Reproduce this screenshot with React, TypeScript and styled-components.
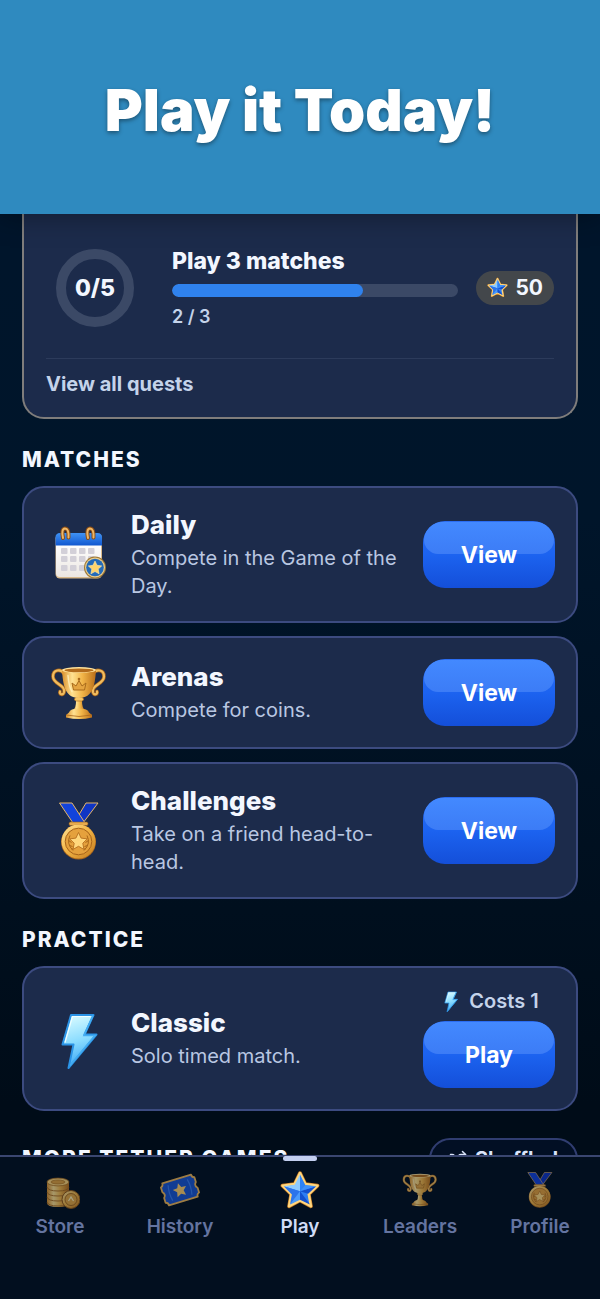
import React from 'react';
import styled, { createGlobalStyle, css } from 'styled-components';
import { Shuffle } from 'lucide-react';

const GlobalStyle = createGlobalStyle`
  *, *::before, *::after {
    box-sizing: border-box;
  }

  body {
    margin: 0;
    background: #000d1b;
    font-family: Inter, 'Liberation Sans', sans-serif;
    color: #f3f7ff;
  }

  h1, h2, h3, p {
    margin: 0;
  }

  button {
    font: inherit;
  }
`;

const Screen = styled.div`
  display: flex;
  flex-direction: column;
  height: 100vh;
  overflow: hidden;
  background: linear-gradient(#00152c, #00152a 40%, #000c18 85%);
`;

const Banner = styled.header`
  position: relative;
  z-index: 1;
  flex: none;
  display: flex;
  justify-content: center;
  padding: 74px 24px 68px;
  background: #2f8abf;
  box-shadow: 0 0 28px rgba(0, 0, 0, 0.4);
`;

const BannerTitle = styled.h1`
  font-size: 58px;
  line-height: 72px;
  font-weight: 900;
  color: #ffffff;
  text-shadow: 0 2px 4px rgba(0, 0, 0, 0.4);
`;

const Content = styled.main`
  flex: 1;
  min-height: 0;
  padding: 0 22px;
  overflow: hidden;
`;

const QuestCard = styled.section`
  padding: 32px 22px 21px;
  background: #1c2b4b;
  border: 2px solid #7f7d7c;
  border-top: 0;
  border-radius: 0 0 22px 22px;
`;

const QuestRow = styled.div`
  display: flex;
  align-items: center;
  padding-bottom: 29px;
  border-bottom: 1px solid #2c3b5b;
`;

const QuestRing = styled.div`
  display: flex;
  align-items: center;
  justify-content: center;
  width: 78px;
  height: 78px;
  margin: 0 38px 0 10px;
  border: 10px solid #3b4966;
  border-radius: 50%;
  font-size: 23px;
  font-weight: 800;
`;

const QuestInfo = styled.div`
  flex: 1;
  display: flex;
  flex-direction: column;
  gap: 8px;
`;

const QuestTitle = styled.h3`
  font-size: 23px;
  line-height: 30px;
  font-weight: 800;
`;

const ProgressTrack = styled.div`
  height: 13px;
  border-radius: 7px;
  background: #3b4966;
  overflow: hidden;
`;

const ProgressFill = styled.div`
  height: 100%;
  border-radius: 7px;
  background: #2f82ee;
`;

const QuestCount = styled.p`
  font-size: 18px;
  line-height: 24px;
  font-weight: 600;
  color: #c4d3ea;
`;

const RewardPill = styled.div`
  display: flex;
  align-items: center;
  gap: 7px;
  height: 34px;
  margin-left: 18px;
  padding: 0 11px;
  border-radius: 17px;
  background: #43474b;
  font-size: 21px;
  font-weight: 700;
`;

const QuestLink = styled.a`
  display: block;
  padding-top: 13px;
  font-size: 20px;
  line-height: 24px;
  font-weight: 700;
  color: #c4d3ea;
  text-decoration: none;
`;

const SectionHead = styled.div`
  display: flex;
  align-items: center;
  justify-content: space-between;
  margin: 27px 0 12px;
`;

const SectionTitle = styled.h2`
  font-size: 21px;
  line-height: 28px;
  font-weight: 800;
  letter-spacing: 2px;
  text-transform: uppercase;
`;

const CardList = styled.div`
  display: flex;
  flex-direction: column;
  gap: 13px;
`;

const Card = styled.article`
  display: flex;
  align-items: center;
  gap: 18px;
  padding: 21px;
  background: #1c2b4b;
  border: 2px solid #3c4b80;
  border-radius: 22px;
`;

const CardIcon = styled.div`
  flex: none;
  display: flex;
  justify-content: center;
  width: 68px;
`;

const CardText = styled.div`
  flex: 1;
  display: flex;
  flex-direction: column;
  gap: 4px;
`;

const CardTitle = styled.h3`
  font-size: 26px;
  line-height: 31px;
  font-weight: 800;
`;

const CardDescription = styled.p`
  font-size: 20px;
  line-height: 28px;
  color: #b9c7e2;
`;

const CardAction = styled.div`
  display: flex;
  flex-direction: column;
  gap: 8px;
`;

const Cost = styled.div`
  display: flex;
  align-items: center;
  justify-content: center;
  gap: 6px;
  font-size: 20px;
  line-height: 24px;
  font-weight: 600;
  color: #c4d3ea;
`;

// The ::before is the glossy highlight over the top half, like a physical key
const ActionButton = styled.button`
  position: relative;
  isolation: isolate;
  overflow: hidden;
  width: 132px;
  height: 67px;
  padding: 0;
  border: 0;
  border-radius: 22px;
  background: linear-gradient(#2b6df3, #1c63f0 50%, #144fd9);
  color: #ffffff;
  font-size: 23px;
  font-weight: 700;
  cursor: pointer;

  &::before {
    content: '';
    position: absolute;
    z-index: -1;
    inset: 1px 1px auto;
    height: 32px;
    border-radius: 20px 20px 16px 16px;
    background: linear-gradient(#4389ff, #3c7cf6);
  }
`;

const ShuffleChip = styled.button`
  display: flex;
  align-items: center;
  gap: 8px;
  height: 42px;
  padding: 0 18px;
  border: 2px solid #303d70;
  border-radius: 21px;
  background: #020f24;
  color: #dbe5fa;
  font-size: 20px;
  font-weight: 700;
`;

const TabBar = styled.nav`
  flex: none;
  display: grid;
  grid-template-columns: repeat(5, 1fr);
  padding-bottom: 60px;
  border-top: 2px solid #3a4670;
  background: #020f1f;
`;

const Tab = styled.a<{ $active?: boolean }>`
  position: relative;
  display: flex;
  flex-direction: column;
  align-items: center;
  gap: 5px;
  padding-top: 13px;
  color: ${({ $active }) => ($active ? '#d0dcf6' : '#6474a0')};
  font-size: 19px;
  line-height: 24px;
  font-weight: 600;
  text-decoration: none;

  svg {
    opacity: ${({ $active }) => ($active ? 1 : 0.65)};
  }

  ${({ $active }) =>
    $active &&
    css`
      &::before {
        content: '';
        position: absolute;
        top: -1px;
        width: 34px;
        height: 5px;
        border-radius: 3px;
        background: #c3cff0;
      }
    `}
`;

const Defs = styled.svg`
  position: absolute;
`;

interface IconProps {
  size?: number;
}

// Gradients shared by every icon on the page
const IconDefs: React.FC = () => (
  <Defs width="0" height="0" aria-hidden="true">
    <defs>
      <linearGradient id="gold" x1="0" y1="0" x2="1" y2="1">
        <stop offset="0" stopColor="#ffe39a" />
        <stop offset="0.45" stopColor="#f3b648" />
        <stop offset="1" stopColor="#c47a1c" />
      </linearGradient>
      <linearGradient id="goldBar" x1="0" y1="0" x2="1" y2="0">
        <stop offset="0" stopColor="#d98f2c" />
        <stop offset="0.3" stopColor="#ffe191" />
        <stop offset="0.6" stopColor="#f2b548" />
        <stop offset="1" stopColor="#b96d18" />
      </linearGradient>
      <linearGradient id="blue" x1="0" y1="0" x2="0" y2="1">
        <stop offset="0" stopColor="#3f93f5" />
        <stop offset="1" stopColor="#1157cf" />
      </linearGradient>
      <linearGradient id="ice" x1="0.3" y1="0" x2="0.5" y2="1">
        <stop offset="0" stopColor="#d8fbff" />
        <stop offset="0.5" stopColor="#8adcff" />
        <stop offset="1" stopColor="#35a2f5" />
      </linearGradient>
      <linearGradient id="paper" x1="0" y1="0" x2="0" y2="1">
        <stop offset="0" stopColor="#ffffff" />
        <stop offset="1" stopColor="#ece7e2" />
      </linearGradient>
    </defs>
  </Defs>
);

const CalendarIcon: React.FC<IconProps> = ({ size = 64 }) => (
  <svg width={size} height={size} viewBox="7 7 64 64" aria-hidden="true">
    <rect x="15.5" y="18" width="46.5" height="44.5" rx="4.5" fill="#d9b98a" />
    <path d="M16 26h45v31q0 4-4 4H20q-4 0-4-4z" fill="url(#paper)" />
    <path d="M15.5 29.5v-8q0-4.5 4.5-4.5h37.500q4.500 0 4.500 4.500v8z" fill="url(#blue)" />
    {[32, 40, 49].map((y) =>
      [21, 30, 39, 48].map((x) => (
        <rect key={`${x}-${y}`} x={x} y={y} width="6.5" height="6" rx="1" fill="#d3d0d8" />
      )),
    )}
    {[26, 51].map((x) => (
      <g key={x} fill="none" strokeLinecap="round">
        <path d={`M${x - 3} 22q-2-9 2-9.500 4 0 3.500 9`} stroke="#8a4d15" strokeWidth="4" />
        <path d={`M${x - 3} 22q-2-9 2-9.500 4 0 3.500 9`} stroke="#f0b765" strokeWidth="2" />
      </g>
    ))}
    <circle cx="55" cy="51.5" r="11" fill="#9f7936" />
    <circle cx="55" cy="51.5" r="10" fill="#e9cd8e" />
    <circle cx="55" cy="51.5" r="8.8" fill="#246bb9" />
    <path
      d="M55 45l2 4.300 4.700.6-3.500 3.200.9 4.700-4.100-2.300-4.100 2.300.9-4.700-3.500-3.200 4.700-.6z"
      fill="#ffd46b"
      stroke="#ffe9ab"
      strokeWidth="0.6"
    />
  </svg>
);

const TrophyIcon: React.FC<IconProps> = ({ size = 64 }) => (
  <svg width={size} height={size} viewBox="7 5.5 64 64" aria-hidden="true">
    <g fill="none" strokeLinecap="round">
      <path d="M24 18c-3-5-11-4-11 3 0 8 13 8 11 16-1 3-5 2-4-1" stroke="#a8661c" strokeWidth="3.6" />
      <path d="M53 18c3-5 11-4 11 3 0 8-13 8-11 16 1 3 5 2 4-1" stroke="#a8661c" strokeWidth="3.6" />
      <path d="M24 18c-3-5-11-4-11 3 0 8 13 8 11 16-1 3-5 2-4-1" stroke="#f1bd5f" strokeWidth="2.2" />
      <path d="M53 18c3-5 11-4 11 3 0 8-13 8-11 16 1 3 5 2 4-1" stroke="#f1bd5f" strokeWidth="2.2" />
    </g>
    <path d="M36 42h6v4q0 6 3 9H33q3-3 3-9z" fill="url(#goldBar)" />
    <rect x="34.5" y="42" width="9" height="3.5" rx="1.7" fill="#f7c665" stroke="#a8661c" strokeWidth="0.6" />
    <path d="M29 57q1-4 10-4t10 4l3 2.500v2.500q-13 3-26 0v-2.500z" fill="url(#goldBar)" />
    <path d="M26 59.5q13 3 26 0" fill="none" stroke="#a8661c" strokeWidth="0.8" />
    <path d="M22 14.500c1 13 2 28 17 28s16-15 17-28z" fill="url(#goldBar)" />
    <ellipse cx="39" cy="14.5" rx="17" ry="3" fill="#ffe29b" />
    <ellipse cx="39" cy="14.8" rx="14.5" ry="1.9" fill="#b26b1b" />
    <path
      d="M33.500 34.500l-1.500-7 4 3 3-5.500 3 5.500 4-3-1.500 7zM39 22.500v2.500"
      fill="#e5a541"
      stroke="#a96b1c"
      strokeWidth="1"
      strokeLinejoin="round"
    />
    <circle cx="39" cy="23.5" r="1.3" fill="#a96b1c" />
    <path d="M28 20q1 12 4 16" fill="none" stroke="#fff0bd" strokeWidth="1.5" strokeLinecap="round" opacity="0.8" />
  </svg>
);

const MedalIcon: React.FC<IconProps> = ({ size = 64 }) => (
  <svg width={size} height={size} viewBox="7 8.5 64 64" aria-hidden="true">
    <g stroke="#e7b566" strokeWidth="1" strokeLinejoin="round">
      <path d="M46 12.500h12l-15 20h-9z" fill="#0f35c4" />
      <path d="M19.500 12.500H32l13 20H33z" fill="#1243dc" />
    </g>
    <rect x="29" y="31.5" width="19" height="3.5" rx="1.5" fill="#e7ab4e" stroke="#8b551a" strokeWidth="0.6" />
    <circle cx="38.5" cy="51.5" r="17.5" fill="#a6641c" />
    <circle cx="38.5" cy="51" r="17" fill="url(#gold)" />
    <circle cx="38.5" cy="51" r="13.3" fill="#e5a13d" stroke="#a76319" strokeWidth="1" />
    <path
      d="M30 45q-4 8 3 15M47 45q4 8-3 15M28.500 50l3 2M29.500 55l3 1M48.500 50l-3 2M47.500 55l-3 1M32 59l2-2M45 59l-2-2"
      fill="none"
      stroke="#a86618"
      strokeWidth="1"
    />
    <path
      d="M38.500 42l2.600 5.600 6.200.8-4.500 4.300 1.100 6.200-5.400-3.100-5.400 3.100 1.100-6.200-4.500-4.300 6.200-.8z"
      fill="#ffd77c"
      stroke="#b66d1d"
      strokeWidth="0.9"
      strokeLinejoin="round"
    />
  </svg>
);

const BoltIcon: React.FC<IconProps> = ({ size = 64 }) => (
  <svg width={size} height={size} viewBox="7 6.5 64 64" aria-hidden="true">
    <path
      d="M31 14.500h22.500l-9 19.500h12l-28 33.500 5-23.500h-11z"
      fill="url(#ice)"
      stroke="#2a93e6"
      strokeWidth="2"
      strokeLinejoin="round"
    />
    <path d="M53 15l-9 20h11L30 65" fill="none" stroke="#43acf1" strokeWidth="1.6" />
    <path d="M25 42l7.500-26h18" fill="none" stroke="#effeff" strokeWidth="1.2" />
  </svg>
);

const StarIcon: React.FC<IconProps> = ({ size = 40 }) => (
  <svg width={size} height={size} viewBox="0 0 64 64" aria-hidden="true">
    <g strokeLinejoin="round">
      <path
        d="M32 5l8.500 17.500L60 25 46 38.500 49.500 58 32 48.500 14.500 58 18 38.500 4 25l19.500-2.500z"
        fill="#2f7df2"
        stroke="#c77b22"
        strokeWidth="6"
      />
      <path
        d="M32 5l8.500 17.500L60 25 46 38.500 49.500 58 32 48.500 14.500 58 18 38.500 4 25l19.500-2.500z"
        fill="#2f7df2"
        stroke="#ffd67e"
        strokeWidth="4"
      />
    </g>
    <path d="M32 7v27l-8.500-10.500zM6 26l17.500-2.500L32 34z" fill="#8ecbff" />
    <path d="M6 26l26 8-13 5zM32 34L16 55l3-16z" fill="#2b74eb" />
    <path d="M32 34v13.500L16 55z" fill="#4a9bfb" />
    <path d="M32 34l16 21-16-7.500zM32 34l26-8-13 12z" fill="#1450cf" />
    <path d="M32 7l8.500 17L32 34z" fill="#2f83f5" />
    <path d="M40.500 24L58 26l-26 8z" fill="#3f91fa" />
  </svg>
);

const CoinsIcon: React.FC<IconProps> = ({ size = 40 }) => (
  <svg width={size} height={size} viewBox="-3 -1 40 40" aria-hidden="true">
    <path d="M4 11v21q0 4 11 4t11-4V11z" fill="url(#goldBar)" />
    <path
      d="M4 16q1 4 11 4t11-4M4 21q1 4 11 4t11-4M4 26q1 4 11 4t11-4M4 31q1 4 11 4t11-4"
      fill="none"
      stroke="#a86a1f"
      strokeWidth="0.9"
    />
    <ellipse cx="15" cy="11" rx="11" ry="3.9" fill="#ffd57a" stroke="#a96b1c" strokeWidth="0.8" />
    <ellipse cx="15" cy="11" rx="7" ry="2" fill="#e1a23e" stroke="#a96b1c" strokeWidth="0.6" />
    <circle cx="28" cy="28.5" r="9" fill="url(#gold)" stroke="#8f5717" strokeWidth="1" />
    <circle cx="28" cy="28.5" r="6" fill="#e4a641" stroke="#9c621c" strokeWidth="0.9" />
    <path d="M25.500 30l2.500-4 2.500 4" fill="none" stroke="#fff0b8" strokeWidth="1.2" />
  </svg>
);

const TicketIcon: React.FC<IconProps> = ({ size = 40 }) => (
  <svg width={size} height={size} viewBox="0 0 40 40" aria-hidden="true">
    <g transform="rotate(-17 20 20)">
      <path
        d="M5 8.500h30q0 3 2.500 3.500v5q-3 3 0 6v5q-2.500.5-2.500 3.500H5q0-3-2.500-3.500v-5q3-3 0-6v-5q2.500-.5 2.500-3.500z"
        fill="#1a55d2"
        stroke="#f0b758"
        strokeWidth="1.8"
        strokeLinejoin="round"
      />
      <path d="M10 12q-2 8 0 16M30 12q2 8 0 16" fill="none" stroke="#3b7cf0" strokeWidth="1.2" />
      <path
        d="M20 13l2.100 4.500 4.800.5-3.500 3.400 1 4.800-4.400-2.400-4.400 2.400 1-4.800-3.500-3.400 4.800-.5z"
        fill="#ffcf6c"
      />
    </g>
  </svg>
);

const matches = [
  { title: 'Daily', description: 'Compete in the Game of the Day.', Icon: CalendarIcon },
  { title: 'Arenas', description: 'Compete for coins.', Icon: TrophyIcon },
  { title: 'Challenges', description: 'Take on a friend head-to-head.', Icon: MedalIcon },
];

const tabs = [
  { label: 'Store', Icon: CoinsIcon },
  { label: 'History', Icon: TicketIcon },
  { label: 'Play', Icon: StarIcon, active: true },
  { label: 'Leaders', Icon: TrophyIcon },
  { label: 'Profile', Icon: MedalIcon },
];

interface GameCardProps {
  title: string;
  description: string;
  icon: React.ReactNode;
  action: string;
  cost?: number;
}

const GameCard: React.FC<GameCardProps> = ({ title, description, icon, action, cost }) => (
  <Card>
    <CardIcon>{icon}</CardIcon>
    <CardText>
      <CardTitle>{title}</CardTitle>
      <CardDescription>{description}</CardDescription>
    </CardText>
    <CardAction>
      {cost !== undefined && (
        <Cost>
          <BoltIcon size={24} />
          Costs {cost}
        </Cost>
      )}
      <ActionButton type="button" aria-label={`${action} ${title}`}>
        {action}
      </ActionButton>
    </CardAction>
  </Card>
);

const App: React.FC = () => {
  const done = 2;
  const goal = 3;

  return (
    <Screen>
      <GlobalStyle />
      <IconDefs />
      <Banner>
        <BannerTitle>Play it Today!</BannerTitle>
      </Banner>

      <Content>
        <QuestCard>
          <QuestRow>
            <QuestRing>0/5</QuestRing>
            <QuestInfo>
              <QuestTitle>Play 3 matches</QuestTitle>
              <ProgressTrack
                role="progressbar"
                aria-label="Play 3 matches"
                aria-valuenow={done}
                aria-valuemax={goal}
              >
                <ProgressFill style={{ width: `${(done / goal) * 100}%` }} />
              </ProgressTrack>
              <QuestCount>
                {done} / {goal}
              </QuestCount>
            </QuestInfo>
            <RewardPill>
              <StarIcon size={21} />
              50
            </RewardPill>
          </QuestRow>
          <QuestLink href="#quests">View all quests</QuestLink>
        </QuestCard>

        <SectionHead>
          <SectionTitle>Matches</SectionTitle>
        </SectionHead>
        <CardList>
          {matches.map(({ title, description, Icon }) => (
            <GameCard
              key={title}
              title={title}
              description={description}
              icon={<Icon />}
              action="View"
            />
          ))}
        </CardList>

        <SectionHead>
          <SectionTitle>Practice</SectionTitle>
        </SectionHead>
        <GameCard
          title="Classic"
          description="Solo timed match."
          icon={<BoltIcon />}
          action="Play"
          cost={1}
        />

        <SectionHead>
          <SectionTitle>More Tether Games</SectionTitle>
          <ShuffleChip type="button">
            <Shuffle size={18} />
            Shuffled
          </ShuffleChip>
        </SectionHead>
      </Content>

      <TabBar>
        {tabs.map(({ label, Icon, active }) => (
          <Tab
            key={label}
            href={`#${label.toLowerCase()}`}
            $active={active}
            aria-current={active ? 'page' : undefined}
          >
            <Icon size={40} />
            {label}
          </Tab>
        ))}
      </TabBar>
    </Screen>
  );
};

export default App;
